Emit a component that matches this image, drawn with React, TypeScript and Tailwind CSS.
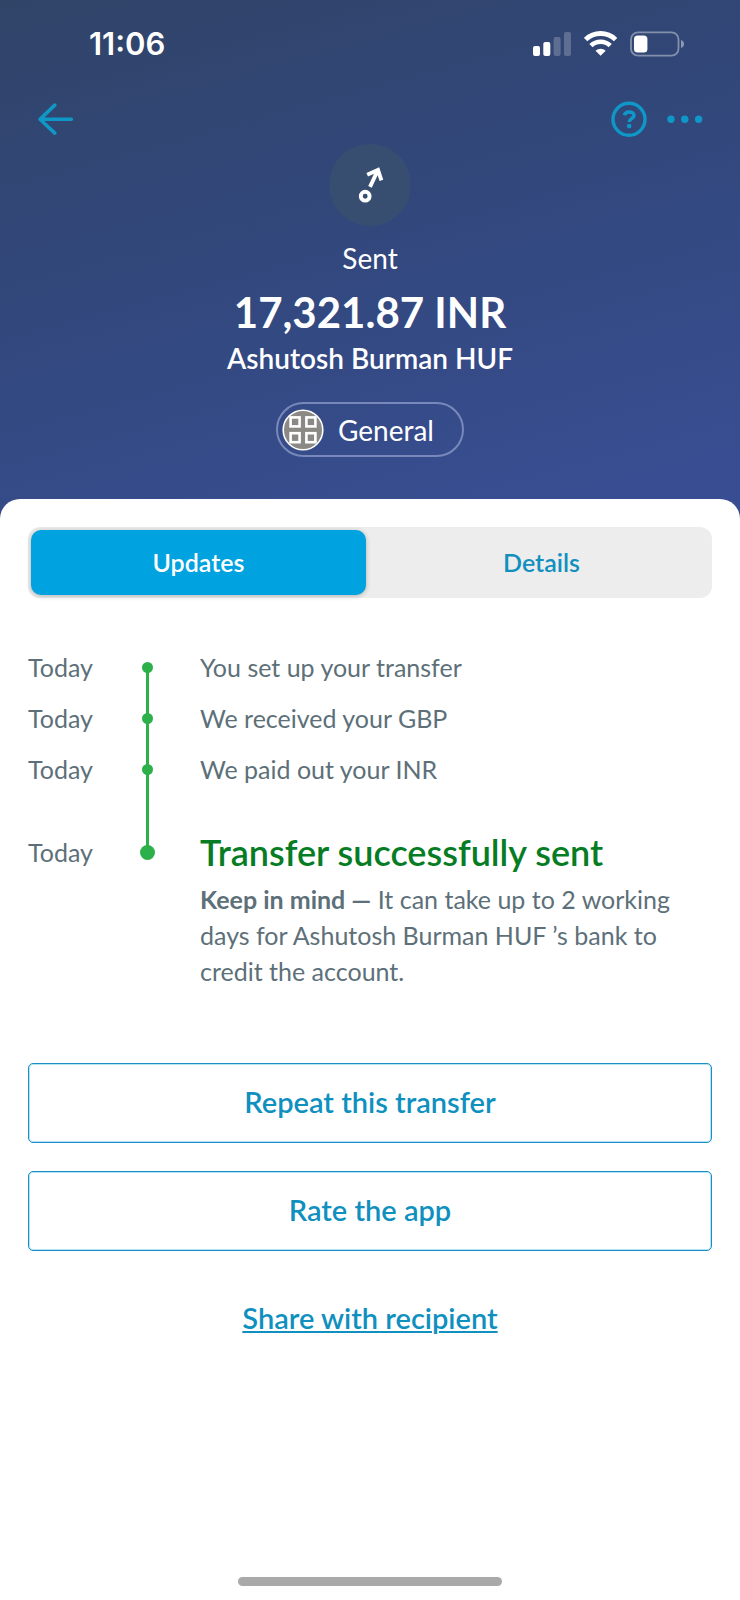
import { useState } from "react";

const updates = ["You set up your transfer", "We received your GBP", "We paid out your INR"];

function StatusBar() {
  return (
    <div className="flex h-22 items-center justify-between pr-[55px] pl-[89px] text-white">
      <time className="font-['Inter',sans-serif] text-[31px] leading-9 font-semibold">11:06</time>
      <div className="flex items-center gap-3">
        <svg width="39" height="26" viewBox="0 0 39 26" fill="currentColor" role="img" aria-label="Signal strength">
          <rect x="0" y="15" width="7" height="10" rx="2" />
          <rect x="10.3" y="11" width="7" height="14" rx="2" />
          <rect x="20.6" y="6" width="7" height="19" rx="2" opacity="0.22" />
          <rect x="31" y="1" width="7" height="24" rx="2" opacity="0.22" />
        </svg>
        <svg width="34" height="26" viewBox="0 0 34 26" role="img" aria-label="Wi-Fi">
          <path d="M1.6 8.6 A21.5 21.5 0 0 1 31.6 8.6" fill="none" stroke="currentColor" strokeWidth="4.8" />
          <path d="M7 14.7 A13.6 13.6 0 0 1 26.2 14.7" fill="none" stroke="currentColor" strokeWidth="4.6" />
          <path d="M16.6 24.8 L11.5 19.7 A7.4 7.4 0 0 1 21.7 19.7 Z" fill="currentColor" />
        </svg>
        <svg width="55" height="26" viewBox="0 0 55 26" role="img" aria-label="Battery low">
          <rect x="1" y="1.3" width="47.5" height="23.4" rx="7" fill="none" stroke="currentColor" strokeWidth="1.8" opacity="0.4" />
          <path d="M51 9 C55 10.2 55 15.8 51 17 Z" fill="currentColor" opacity="0.45" />
          <rect x="4" y="4.6" width="13.4" height="17" rx="3.6" fill="currentColor" />
        </svg>
      </div>
    </div>
  );
}

function NavBar() {
  return (
    <nav className="flex h-[62px] items-center justify-between pr-[35px] pl-9 text-[#0f97c7]">
      <button type="button" aria-label="Back">
        <svg width="40" height="40" viewBox="0 0 40 40" fill="none" stroke="currentColor" strokeWidth="3.6" strokeLinecap="round" strokeLinejoin="round">
          <path d="M35.4 20.3 H4 M18.8 6.1 L4 20.3 L18.8 34.1" />
        </svg>
      </button>
      <div className="flex items-center gap-4">
        <button type="button" aria-label="Help">
          <svg width="40" height="40" viewBox="0 0 40 40" fill="none" stroke="currentColor">
            <circle cx="20" cy="20.3" r="16" strokeWidth="3.4" />
            <path d="M15.3 16.3 C16 14 17.9 13 20.2 13 C23 13 25 14.4 25 16.6 C25 19.6 20.3 19.6 20.3 23" strokeWidth="3.6" />
            <circle cx="20.2" cy="27.1" r="2.3" fill="currentColor" stroke="none" />
          </svg>
        </button>
        <button type="button" aria-label="More options">
          <svg width="40" height="40" viewBox="0 0 40 40" fill="currentColor">
            <circle cx="6" cy="20.3" r="3.7" />
            <circle cx="19.8" cy="20.3" r="3.7" />
            <circle cx="33.6" cy="20.3" r="3.7" />
          </svg>
        </button>
      </div>
    </nav>
  );
}

function Summary() {
  return (
    <header className="flex flex-col items-center pb-[42px] text-white">
      <div className="-mt-1.5 flex size-[82px] items-center justify-center rounded-full bg-[#384e71]">
        <svg width="40" height="40" viewBox="0 0 40 40" fill="none" stroke="currentColor" strokeWidth="3.9" aria-hidden="true">
          <circle cx="15.2" cy="31.2" r="4.4" />
          <path d="M20 21.8 L28 4.8 M17.2 9.8 L28 5 L31.4 15.4" />
        </svg>
      </div>
      <p className="mt-3 text-[28px] leading-10">Sent</p>
      <h1 className="mt-2.5 text-[42px] leading-12 font-bold">17,321.87 INR</h1>
      <p className="mt-1 text-[28px] leading-9 font-semibold">Ashutosh Burman HUF</p>
      <button type="button" className="mt-[26px] flex h-[55px] items-center gap-3.5 rounded-full border-2 border-[#7888ba] pr-7 pl-1 text-[28px]">
        <svg width="42" height="42" viewBox="0 0 42 42" fill="none" stroke="currentColor" aria-hidden="true">
          <circle cx="21" cy="21" r="19.8" fill="#8b8986" strokeWidth="1.6" />
          <g strokeWidth="2.6">
            <rect x="8.6" y="8.4" width="9" height="9" />
            <rect x="24.4" y="8.4" width="9" height="9" />
            <rect x="8.6" y="24.2" width="9" height="9" />
            <rect x="24.4" y="24.2" width="9" height="9" />
          </g>
        </svg>
        General
      </button>
    </header>
  );
}

function Tabs() {
  const [active, setActive] = useState("Updates");
  return (
    <div role="tablist" className="grid h-[71px] grid-cols-2 gap-2 rounded-xl bg-[#ededed] p-[3px]">
      {["Updates", "Details"].map((tab) => (
        <button
          key={tab}
          type="button"
          role="tab"
          aria-selected={tab === active}
          onClick={() => setActive(tab)}
          className={
            tab === active
              ? "rounded-[10px] bg-[#00a2df] text-[25px] font-semibold text-white shadow-[0_1px_5px_rgba(0,0,0,0.25)]"
              : "rounded-[10px] text-[25px] font-semibold text-[#1190bf]"
          }
        >
          {tab}
        </button>
      ))}
    </div>
  );
}

function Timeline() {
  return (
    <ol className="mt-11 text-[25px] text-[#5d7079]">
      {updates.map((text, i) => (
        <li key={text} className={i === updates.length - 1 ? "flex h-[83px]" : "flex h-[51px]"}>
          <span className="w-[102px] leading-[51px]">Today</span>
          <span className="relative w-[70px]">
            <span className="absolute top-[25px] left-4 h-full w-[3px] bg-[#2cb04a]" />
            <span className="absolute top-5 left-3 size-[11px] rounded-full bg-[#2cb04a]" />
          </span>
          <span className="flex-1 leading-[51px]">{text}</span>
        </li>
      ))}
      <li className="flex">
        <span className="w-[102px] leading-[51px]">Today</span>
        <span className="relative w-[70px]">
          <span className="absolute top-[18px] left-[10px] size-[15px] rounded-full bg-[#2cb04a]" />
        </span>
        <div className="flex-1">
          <h2 className="text-[36px] leading-[50px] font-semibold text-[#067d24]">Transfer successfully sent</h2>
          <p className="mt-1 leading-9">
            <strong className="font-bold">Keep in mind —</strong> It can take up to 2 working
            <br />
            days for Ashutosh Burman HUF ’s bank to
            <br />
            credit the account.
          </p>
        </div>
      </li>
    </ol>
  );
}

const outlineButton =
  "h-20 rounded-[5px] border border-[#1a8fc4] pb-0.5 shadow-[inset_0_0_0_1px_#b5e3f5]";

export default function App() {
  return (
    <div className="flex min-h-screen flex-col bg-[linear-gradient(165deg,#304468_0px,#32487e_340px,#394e92_640px)] font-['Lato',sans-serif]">
      <StatusBar />
      <NavBar />
      <Summary />
      <main className="flex flex-1 flex-col rounded-t-[20px] bg-white px-7 pt-7 pb-[14px]">
        <Tabs />
        <Timeline />
        <div className="mt-[74px] flex flex-col gap-7 text-[29px] font-semibold text-[#0f90bf]">
          <button type="button" className={outlineButton}>Repeat this transfer</button>
          <button type="button" className={outlineButton}>Rate the app</button>
          <a href="#share" className="self-center py-[19px] leading-10 underline decoration-2 underline-offset-2">Share with recipient</a>
        </div>
        <div className="mt-auto h-[9px] w-66 self-center rounded-full bg-[#a9a9a9]" />
      </main>
    </div>
  );
}
